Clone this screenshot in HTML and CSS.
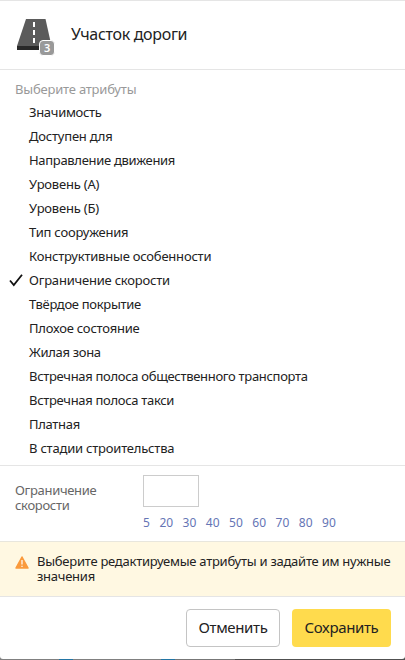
FILE: index.html
```html
<!DOCTYPE html>
<html lang="ru">
<head>
<meta charset="utf-8">
<title>Участок дороги</title>
<link rel="stylesheet" href="styles.css">
</head>
<body>
<main class="panel">
  <header class="header">
    <div class="road">
      <svg width="38" height="38" viewBox="0 0 38 38">
        <path d="M10 3H29.5L35.5 30H1Z" fill="#5b5b5b"/>
        <path d="M1 30H35.5V34H1Z" fill="#292929"/>
        <path d="M18 6v5M18 14v5M18 22v5" stroke="#fff" stroke-width="2"/>
      </svg>
      <span class="badge">3</span>
    </div>
    <h1 class="title">Участок дороги</h1>
  </header>
  <section class="attributes">
    <h2 class="caption">Выберите атрибуты</h2>
    <ul class="list">
      <li class="item">Значимость</li>
      <li class="item wide">Доступен для</li>
      <li class="item">Направление движения</li>
      <li class="item wide">Уровень (А)</li>
      <li class="item wide">Уровень (Б)</li>
      <li class="item wide">Тип сооружения</li>
      <li class="item wide">Конструктивные особенности</li>
      <li class="item wide">
        <svg class="check" width="14" height="14" viewBox="0 0 14 14"><path d="M1 7.5L4.8 12L13 1.7" fill="none" stroke="#111" stroke-width="1.8"/></svg>Ограничение скорости</li>
      <li class="item">Твёрдое покрытие</li>
      <li class="item wide">Плохое состояние</li>
      <li class="item">Жилая зона</li>
      <li class="item">Встречная полоса общественного транспорта</li>
      <li class="item">Встречная полоса такси</li>
      <li class="item">Платная</li>
      <li class="item wide">В стадии строительства</li>
    </ul>
  </section>
  <section class="field">
    <label class="label" for="speed">Ограничение скорости</label>
    <div>
      <input class="input" id="speed" type="text">
      <div class="presets"><a>5</a><a>20</a><a>30</a><a>40</a><a>50</a><a>60</a><a>70</a><a>80</a><a>90</a></div>
    </div>
  </section>
  <section class="alert">
    <svg class="warning" width="14" height="13" viewBox="0 0 14 13">
      <path d="M7 1L13 12H1Z" fill="#fa9a3c" stroke="#fa9a3c" stroke-width="1.5" stroke-linejoin="round"/>
      <path d="M7 4v4.5M7 9.7v1.3" stroke="#fff" stroke-width="1.2"/>
    </svg>
    <p class="message">Выберите редактируемые атрибуты и задайте им нужные значения</p>
  </section>
  <footer class="footer">
    <button class="button cancel">Отменить</button>
    <button class="button save">Сохранить</button>
  </footer>
</main>
</body>
</html>
```

FILE: styles.css
```css
* { box-sizing: border-box; }
html { height: 660px; }
body { height: 660px; margin: 0; background: linear-gradient(90deg, #808080 59px, #2375a4 59px 73px, #808080 73px 161px, #2375a4 161px 175px, #777 175px 235px, #505050 235px); font: 13px/16px "Noto Sans", "Open Sans", sans-serif; letter-spacing: -0.31px; color: #222; }
h1, h2, p, ul { margin: 0; padding: 0; font-weight: 400; }
.panel { height: 659px; background: #fff; border-top: 1px solid #e5e5e5; border-radius: 0 0 3px 3px; overflow: hidden; }
.header { height: 69px; display: flex; align-items: center; border-bottom: 1px solid #e5e5e5; padding-left: 16px; }
.road { position: relative; width: 38px; height: 38px; margin-right: 17px; }
.road svg { display: block; }
.badge { position: absolute; left: 23px; top: 24px; width: 16px; height: 16px; border: 1px solid #fff; border-radius: 4px; background: #999; color: #fff; font-size: 11px; line-height: 14px; font-weight: 600; text-align: center; }
.title { font-size: 16px; line-height: 24px; margin-top: -2px; }
.attributes { height: 395px; padding-top: 11px; }
.caption { font-size: 13px; line-height: 16px; letter-spacing: -0.2px; color: #999; padding-left: 15px; margin-bottom: 3px; }
.list { list-style: none; }
.item { position: relative; height: 24px; line-height: 24px; padding-left: 29px; }
.wide { letter-spacing: -0.21px; }
.check { position: absolute; left: 9px; top: 5px; }
.field { height: 76px; border-top: 1px solid #e5e5e5; display: flex; padding: 9px 0 0 15px; }
.label { width: 128px; padding: 8px 24px 0 0; line-height: 15px; color: #666; }
.input { display: block; width: 56px; height: 32px; border: 1px solid #ccc; padding: 0 8px; font: inherit; }
.presets { display: flex; gap: 9.5px; margin-top: 8px; font-size: 12px; line-height: 16px; letter-spacing: 0; color: #6575b5; }
.alert { height: 55px; background: #fff8e2; border-top: 1px solid #e8e6dd; display: flex; padding: 12px 10px 0 15px; }
.warning { flex: none; margin: 2px 8px 0 0; }
.message { line-height: 15px; letter-spacing: -0.25px; }
.footer { border-top: 1px solid #e5e5e5; height: 63px; display: flex; justify-content: flex-end; gap: 12px; padding: 12px 14px 0 0; }
.button { height: 38px; font: 15px/20px "Noto Sans", sans-serif; letter-spacing: -0.35px; border-radius: 4px; color: #222; padding: 0 0 2px; }
.cancel { width: 94px; background: #fff; border: 1px solid #c4c4c4; }
.save { width: 99px; background: #ffdb4d; border: 0; }
```
